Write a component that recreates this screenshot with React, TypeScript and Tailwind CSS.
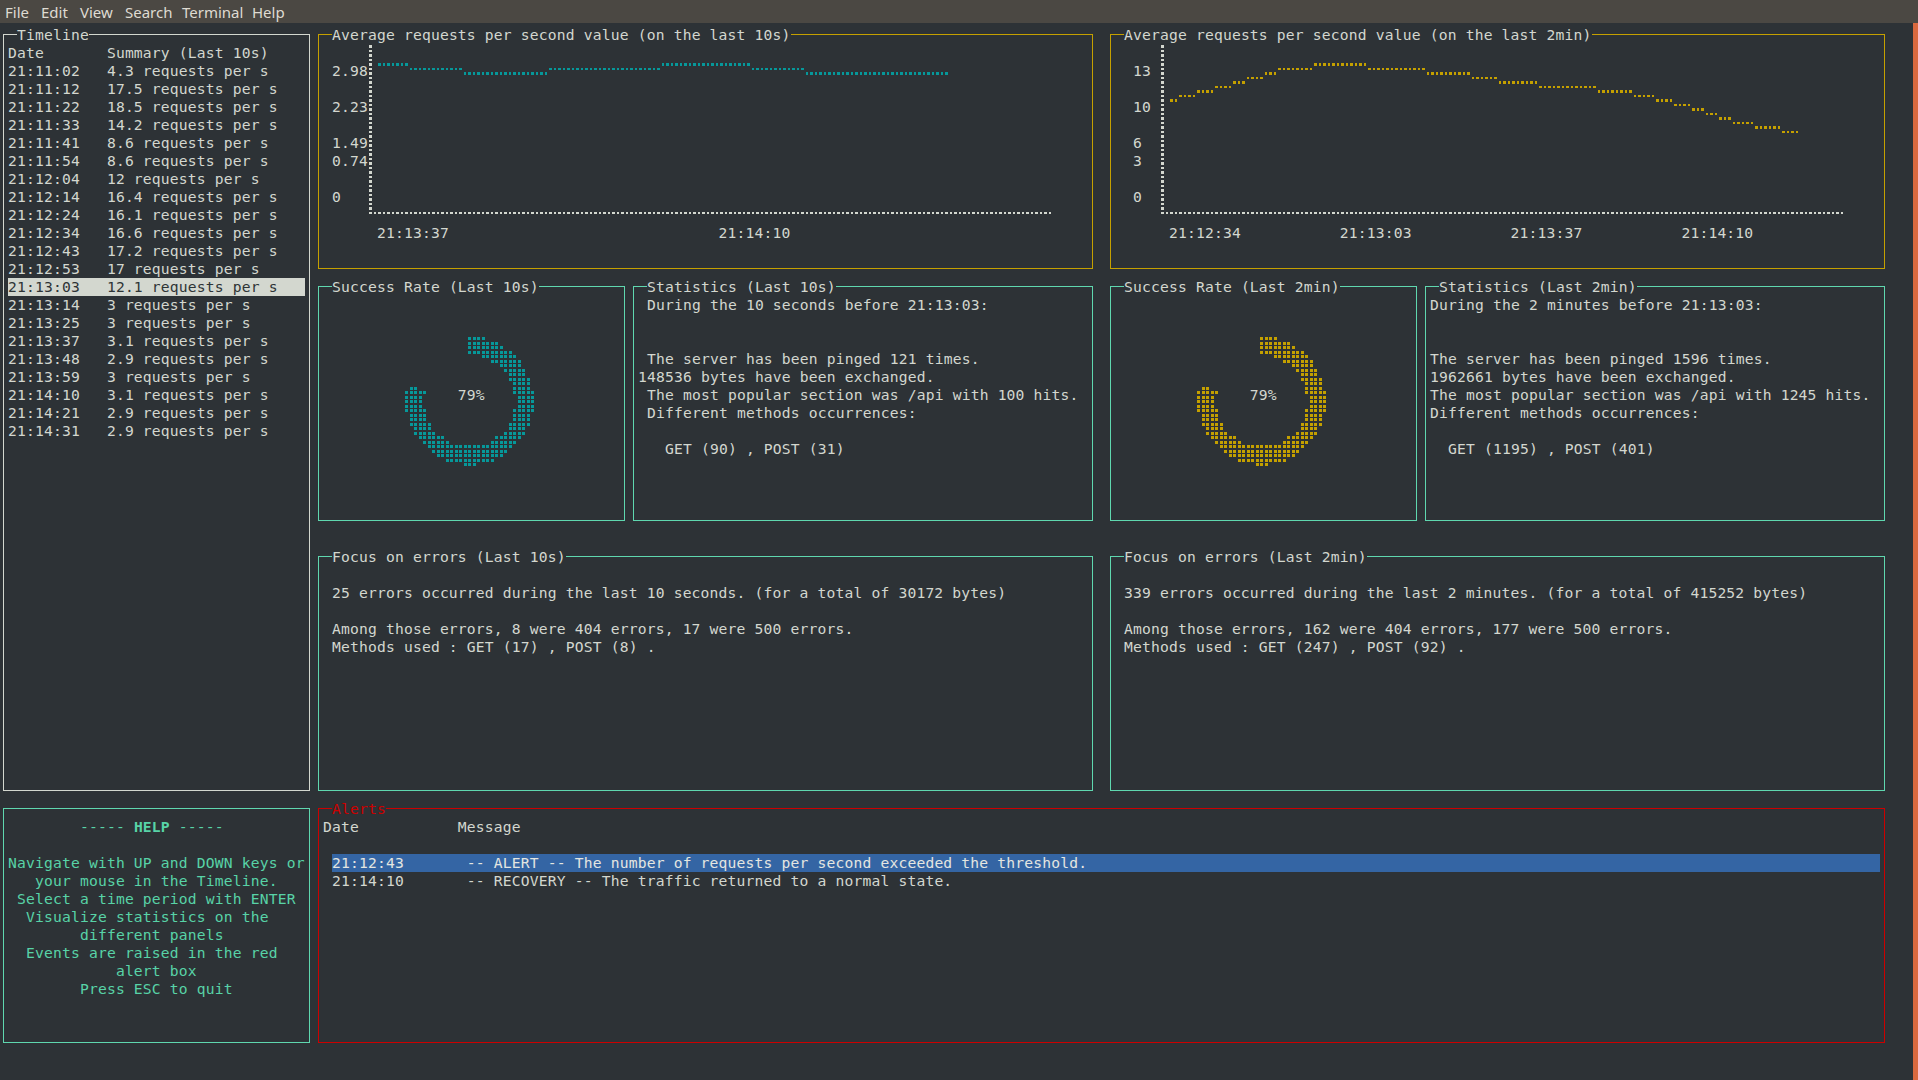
import React from "react";

type Dot = [number, number];

const DX = (i: number) => 1.5 + 4.5 * i;
const DY = (m: number) => 28.25 + 4.5 * m;

function lineChartDots(i0: number, segs: Array<[number, number, number]>) {
  const line: Dot[] = [];
  for (const [a, b, k] of segs) {
    for (let j = a; j <= b; j++) line.push([DX(i0 + j), DY(4 + k)]);
  }
  const axis: Dot[] = [];
  for (let m = 4; m <= 41; m++) axis.push([DX(i0), DY(m)]);
  for (let j = 1; j <= 151; j++) axis.push([DX(i0 + j), DY(41)]);
  return { line, axis };
}

function donutDots(cx: number, cy: number) {
  const out: Dot[] = [];
  const i1 = Math.floor((cx - 70) / 4.5);
  const i2 = Math.ceil((cx + 70) / 4.5);
  const m1 = Math.floor((cy - 70 - 28.25) / 4.5);
  const m2 = Math.ceil((cy + 70 - 28.25) / 4.5);
  for (let i = i1; i <= i2; i++) {
    for (let m = m1; m <= m2; m++) {
      const x = DX(i);
      const y = DY(m);
      const dx = x - cx;
      const dy = y - cy;
      const r = Math.hypot(dx, dy);
      if (r < 45.5 || r > 64) continue;
      let a = (Math.atan2(dx, -dy) * 180) / Math.PI;
      if (a < 0) a += 360;
      if (a > 284.4) continue;
      out.push([x, y]);
    }
  }
  return out;
}

function path(dots: Dot[], ox: number, oy: number, s: number) {
  return dots
    .map(([x, y]) => `M${(x - ox - s / 2).toFixed(2)} ${(y - oy - s / 2).toFixed(2)}h${s}v${s}h-${s}z`)
    .join("");
}

const chart1 = lineChartDots(82, [
  [2, 8, 4],
  [9, 20, 5],
  [21, 39, 6],
  [40, 64, 5],
  [65, 84, 4],
  [85, 96, 5],
  [97, 128, 6],
]);

const chart2 = lineChartDots(258, [
  [2, 3, 12],
  [4, 7, 11],
  [8, 11, 10],
  [12, 15, 9],
  [16, 18, 8],
  [19, 22, 7],
  [23, 25, 6],
  [26, 33, 5],
  [34, 45, 4],
  [46, 58, 5],
  [59, 68, 6],
  [69, 74, 7],
  [75, 83, 8],
  [84, 96, 9],
  [97, 104, 10],
  [105, 109, 11],
  [110, 113, 12],
  [114, 117, 13],
  [118, 120, 14],
  [121, 123, 15],
  [124, 126, 16],
  [127, 131, 17],
  [132, 137, 18],
  [138, 141, 19],
]);

const donut1 = donutDots(469.5, 401);
const donut2 = donutDots(1261.5, 401);

function Frame({ area, color }: { area: string; color: string }) {
  return <div className={`${area} mt-[8px] mb-[9px] mx-[4px] border ${color}`} />;
}

function Label({ area, text, color }: { area: string; text: string; color: string }) {
  return (
    <div className={`${area} whitespace-pre`}>
      <span className={`inline-block h-[18px] bg-[#2d3236] ${color}`}>{text}</span>
    </div>
  );
}

function Lines({ lines }: { lines: string[] }) {
  return (
    <>
      {lines.map((l, i) => (
        <div key={i} className="relative h-[18px] whitespace-pre">
          {l}
        </div>
      ))}
    </>
  );
}

const sp = (n: number) => " ".repeat(n);

const timeline: Array<[string, string]> = [
  ["21:11:02", "4.3 requests per s"],
  ["21:11:12", "17.5 requests per s"],
  ["21:11:22", "18.5 requests per s"],
  ["21:11:33", "14.2 requests per s"],
  ["21:11:41", "8.6 requests per s"],
  ["21:11:54", "8.6 requests per s"],
  ["21:12:04", "12 requests per s"],
  ["21:12:14", "16.4 requests per s"],
  ["21:12:24", "16.1 requests per s"],
  ["21:12:34", "16.6 requests per s"],
  ["21:12:43", "17.2 requests per s"],
  ["21:12:53", "17 requests per s"],
  ["21:13:03", "12.1 requests per s"],
  ["21:13:14", "3 requests per s"],
  ["21:13:25", "3 requests per s"],
  ["21:13:37", "3.1 requests per s"],
  ["21:13:48", "2.9 requests per s"],
  ["21:13:59", "3 requests per s"],
  ["21:14:10", "3.1 requests per s"],
  ["21:14:21", "2.9 requests per s"],
  ["21:14:31", "2.9 requests per s"],
];

const chart1Lines = [
  "",
  " 2.98",
  "",
  " 2.23",
  "",
  " 1.49",
  " 0.74",
  "",
  " 0",
  "",
  sp(6) + "21:13:37" + sp(30) + "21:14:10",
  "",
];

const chart2Lines = [
  "",
  "  13",
  "",
  "  10",
  "",
  "  6",
  "  3",
  "",
  "  0",
  "",
  sp(6) + "21:12:34" + sp(11) + "21:13:03" + sp(11) + "21:13:37" + sp(11) + "21:14:10",
  "",
];

function MenuBar() {
  return (
    <div className="h-[23px] shrink-0 bg-[#4b4843] flex items-start pt-[1px] pl-[5px] font-['Noto_Sans',sans-serif] text-[15px] leading-[22px] tracking-normal text-[#dfdbd2]">
      <span className="w-[36px]">File</span>
      <span className="w-[39px]">Edit</span>
      <span className="w-[45px]">View</span>
      <span className="w-[57px]">Search</span>
      <span className="w-[70px]">Terminal</span>
      <span>Help</span>
    </div>
  );
}

export default function App() {
  return (
    <div className="w-[1918px] h-[1080px] overflow-hidden flex flex-col bg-[#2d3236] font-['DejaVu_Sans_Mono',monospace] text-[14.67px] leading-[18px] tracking-[0.167px] text-[#d3d7cf]">
      <MenuBar />
      <div className="flex flex-1 min-h-0">
        <div className="flex-1 pt-[3px]">
          <div className="-ml-px grid grid-cols-[repeat(210,9px)] grid-rows-[repeat(57,18px)]">
            {/* Timeline */}
            <Frame area="col-[1/span_35] row-[1/span_43]" color="border-[#d3d7cf]" />
            <Label area="col-[3/span_32] row-[1/span_1]" text="Timeline" color="text-[#d3d7cf]" />
            <div className="col-[2/span_33] row-[2/span_41]">
              <div className="h-[18px] whitespace-pre">{"Date".padEnd(11) + "Summary (Last 10s)"}</div>
              {timeline.map(([d, s]) => (
                <div
                  key={d}
                  className={
                    d === "21:13:03"
                      ? "h-[18px] whitespace-pre bg-[#d3d7cf] text-[#2e3436]"
                      : "h-[18px] whitespace-pre"
                  }
                >
                  {d.padEnd(11) + s}
                </div>
              ))}
            </div>

            {/* Help */}
            <Frame area="col-[1/span_35] row-[44/span_14]" color="border-[#5fd7af]" />
            <div className="col-[2/span_33] row-[45/span_12] text-[#58d3a7]">
              <div className="h-[18px] whitespace-pre">
                {sp(8) + "----- "}
                <span className="font-bold">HELP</span>
                {" -----"}
              </div>
              <Lines
                lines={[
                  "",
                  "Navigate with UP and DOWN keys or",
                  "   your mouse in the Timeline.",
                  " Select a time period with ENTER",
                  "  Visualize statistics on the",
                  "        different panels",
                  "  Events are raised in the red",
                  "            alert box",
                  "        Press ESC to quit",
                ]}
              />
            </div>

            {/* Chart 10s */}
            <Frame area="col-[36/span_87] row-[1/span_14]" color="border-[#c4a000]" />
            <Label
              area="col-[38/span_84] row-[1/span_1]"
              text="Average requests per second value (on the last 10s)"
              color="text-[#d3d7cf]"
            />
            <div className="col-[37/span_85] row-[2/span_12] relative">
              <svg className="absolute left-0 top-0" width={765} height={216} shapeRendering="crispEdges">
                <path d={path(chart1.axis, 323, 44, 2.5)} fill="#d3d7cf" />
                <path d={path(chart1.line, 323, 44, 2.5)} fill="#06989a" />
              </svg>
              <Lines lines={chart1Lines} />
            </div>

            {/* Chart 2min */}
            <Frame area="col-[124/span_87] row-[1/span_14]" color="border-[#c4a000]" />
            <Label
              area="col-[126/span_84] row-[1/span_1]"
              text="Average requests per second value (on the last 2min)"
              color="text-[#d3d7cf]"
            />
            <div className="col-[125/span_85] row-[2/span_12] relative">
              <svg className="absolute left-0 top-0" width={765} height={216} shapeRendering="crispEdges">
                <path d={path(chart2.axis, 1115, 44, 2.5)} fill="#d3d7cf" />
                <path d={path(chart2.line, 1115, 44, 2.5)} fill="#c4a000" />
              </svg>
              <Lines lines={chart2Lines} />
            </div>

            {/* Success 10s */}
            <Frame area="col-[36/span_35] row-[15/span_14]" color="border-[#5fd7af]" />
            <Label area="col-[38/span_32] row-[15/span_1]" text="Success Rate (Last 10s)" color="text-[#d3d7cf]" />
            <div className="col-[37/span_33] row-[16/span_12] relative">
              <svg className="absolute left-0 top-0" width={297} height={216} shapeRendering="crispEdges">
                <path d={path(donut1, 323, 296, 3)} fill="#06989a" />
              </svg>
              <Lines lines={["", "", "", "", "", sp(15) + "79%"]} />
            </div>

            {/* Stats 10s */}
            <Frame area="col-[71/span_52] row-[15/span_14]" color="border-[#5fd7af]" />
            <Label area="col-[73/span_49] row-[15/span_1]" text="Statistics (Last 10s)" color="text-[#d3d7cf]" />
            <div className="col-[72/span_50] row-[16/span_12]">
              <Lines
                lines={[
                  " During the 10 seconds before 21:13:03:",
                  "",
                  "",
                  " The server has been pinged 121 times.",
                  "148536 bytes have been exchanged.",
                  " The most popular section was /api with 100 hits.",
                  " Different methods occurrences:",
                  "",
                  "   GET (90) , POST (31)",
                ]}
              />
            </div>

            {/* Success 2min */}
            <Frame area="col-[124/span_35] row-[15/span_14]" color="border-[#5fd7af]" />
            <Label area="col-[126/span_32] row-[15/span_1]" text="Success Rate (Last 2min)" color="text-[#d3d7cf]" />
            <div className="col-[125/span_33] row-[16/span_12] relative">
              <svg className="absolute left-0 top-0" width={297} height={216} shapeRendering="crispEdges">
                <path d={path(donut2, 1115, 296, 3)} fill="#c4a000" />
              </svg>
              <Lines lines={["", "", "", "", "", sp(15) + "79%"]} />
            </div>

            {/* Stats 2min */}
            <Frame area="col-[159/span_52] row-[15/span_14]" color="border-[#5fd7af]" />
            <Label area="col-[161/span_49] row-[15/span_1]" text="Statistics (Last 2min)" color="text-[#d3d7cf]" />
            <div className="col-[160/span_50] row-[16/span_12]">
              <Lines
                lines={[
                  "During the 2 minutes before 21:13:03:",
                  "",
                  "",
                  "The server has been pinged 1596 times.",
                  "1962661 bytes have been exchanged.",
                  "The most popular section was /api with 1245 hits.",
                  "Different methods occurrences:",
                  "",
                  "  GET (1195) , POST (401)",
                ]}
              />
            </div>

            {/* Focus 10s */}
            <Frame area="col-[36/span_87] row-[30/span_14]" color="border-[#5fd7af]" />
            <Label area="col-[38/span_84] row-[30/span_1]" text="Focus on errors (Last 10s)" color="text-[#d3d7cf]" />
            <div className="col-[37/span_85] row-[31/span_12]">
              <Lines
                lines={[
                  "",
                  " 25 errors occurred during the last 10 seconds. (for a total of 30172 bytes)",
                  "",
                  " Among those errors, 8 were 404 errors, 17 were 500 errors.",
                  " Methods used : GET (17) , POST (8) .",
                ]}
              />
            </div>

            {/* Focus 2min */}
            <Frame area="col-[124/span_87] row-[30/span_14]" color="border-[#5fd7af]" />
            <Label area="col-[126/span_84] row-[30/span_1]" text="Focus on errors (Last 2min)" color="text-[#d3d7cf]" />
            <div className="col-[125/span_85] row-[31/span_12]">
              <Lines
                lines={[
                  "",
                  " 339 errors occurred during the last 2 minutes. (for a total of 415252 bytes)",
                  "",
                  " Among those errors, 162 were 404 errors, 177 were 500 errors.",
                  " Methods used : GET (247) , POST (92) .",
                ]}
              />
            </div>

            {/* Alerts */}
            <Frame area="col-[36/span_175] row-[44/span_14]" color="border-[#cc0000]" />
            <Label area="col-[38/span_172] row-[44/span_1]" text="Alerts" color="text-[#cc0000]" />
            <div className="col-[37/span_173] row-[45/span_12]">
              <div className="h-[18px] whitespace-pre">{"Date".padEnd(15) + "Message"}</div>
              <div className="h-[18px]" />
              <div className="h-[18px] ml-[9px] whitespace-pre bg-[#3465a4] text-[#e4e6e1]">
                {"21:12:43".padEnd(15) + "-- ALERT -- The number of requests per second exceeded the threshold."}
              </div>
              <div className="h-[18px] ml-[9px] whitespace-pre">
                {"21:14:10".padEnd(15) + "-- RECOVERY -- The traffic returned to a normal state."}
              </div>
            </div>
          </div>
        </div>
        <div className="w-[5px] shrink-0 bg-[#d9693f]" />
      </div>
    </div>
  );
}
